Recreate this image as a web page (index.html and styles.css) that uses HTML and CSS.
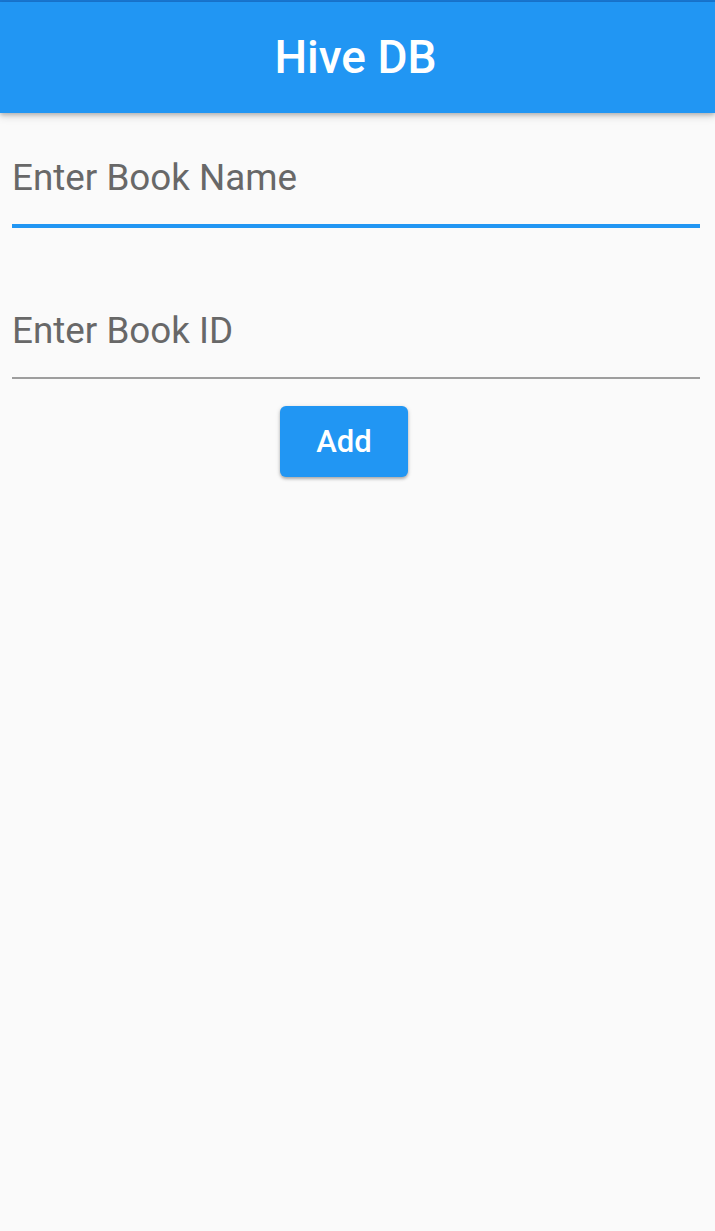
FILE: index.html
```html
<!DOCTYPE html>
<html>
<head>
<meta charset="utf-8">
<link rel="stylesheet" href="styles.css">
</head>
<body>
<div class="status"></div>
<header class="appbar"><h1 class="title">Hive DB</h1></header>
<main class="form">
  <div class="field field-focused">Enter Book Name</div>
  <div class="field field-idle">Enter Book ID</div>
  <div class="actions"><button class="btn">Add</button></div>
</main>
</body>
</html>
```
FILE: styles.css
```css
html, body {
  margin: 0;
  padding: 0;
  background: #fafafa;
  font-family: Roboto, "Noto Sans", sans-serif;
}
body {
  width: 715px;
  height: 1231px;
  overflow: hidden;
}
.status {
  height: 2px;
  background: #1976d2;
}
.appbar {
  height: 111px;
  background: #2196f3;
  display: flex;
  align-items: center;
  justify-content: center;
  padding-right: 4px;
  box-shadow: 0 2px 4px rgba(0,0,0,0.2), 0 4px 8px rgba(0,0,0,0.12);
  position: relative;
  z-index: 1;
}
.title {
  margin: 0;
  color: #fff;
  font-size: 46px;
  font-weight: 500;
  line-height: 52px;
  padding-bottom: 2px;
}
.form {
  display: flex;
  flex-direction: column;
  padding: 42px 15px 0 12px;
}
.field {
  font-size: 36.8px;
  line-height: 45px;
  color: #686868;
  padding-bottom: 24px;
}
.field-focused {
  border-bottom: 4px solid #2196f3;
}
.field-idle {
  margin-top: 80px;
  border-bottom: 2px solid #9e9e9e;
}
.actions {
  display: flex;
  padding-left: 268px;
  margin-top: 27px;
}
.btn {
  width: 128px;
  height: 71px;
  border: none;
  border-radius: 6px;
  background: #2196f3;
  color: #fff;
  font-family: Roboto, "Noto Sans", sans-serif;
  font-size: 31px;
  font-weight: 500;
  box-shadow: 0 2px 3px rgba(0,0,0,0.25), 0 1px 5px rgba(0,0,0,0.12);
  padding: 0;
}
```
